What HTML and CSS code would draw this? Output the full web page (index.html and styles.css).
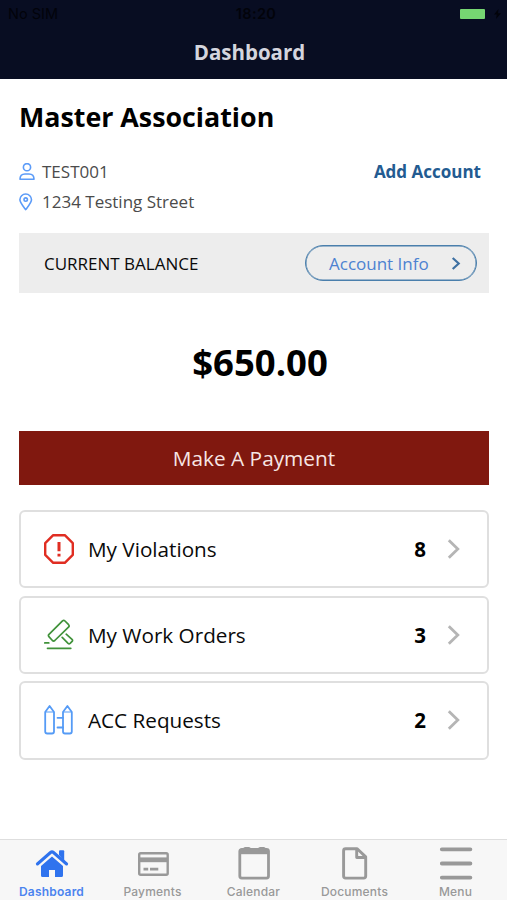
FILE: index.html
```html
<!DOCTYPE html>
<html lang="en">
<head>
<meta charset="utf-8">
<title>Dashboard</title>
<link rel="stylesheet" href="styles.css">
</head>
<body>
<div class="app">
  <header class="header">
    <div class="status">
      <span class="carrier">No SIM</span>
      <span class="clock">18:20</span>
      <span class="power"><span class="battery"></span><svg width="7" height="10" viewBox="0 0 7 10"><path d="M4.500 0 0 5.600h2.800L2 10l5-5.800H4z" fill="#02030a"/></svg></span>
    </div>
    <h1 class="title"><span>Dashboard</span></h1>
  </header>
  <main class="main">
    <h2 class="association"><span>Master Association</span></h2>
    <section class="account">
      <div class="details">
        <div class="detail"><svg width="16" height="18" viewBox="0 0 16 18" fill="none" stroke="#5b9bf8" stroke-width="1.600"><circle cx="8" cy="4.200" r="3.600"/><path d="M1 16.200c0-3.400 2.200-5.200 5-5.200h4c2.800 0 5 1.800 5 5.200z" stroke-linejoin="round"/></svg><span class="number">TEST001</span></div>
        <div class="detail"><svg width="16" height="18" viewBox="0 0 16 18" fill="none" stroke="#5b9bf8" stroke-width="1.600"><path d="M6.700 16.600C3.500 12.500.9 9.500.9 6.800a5.800 5.800 0 0 1 11.600 0c0 2.700-2.600 5.700-5.800 9.800z" stroke-linejoin="round"/><circle cx="6.700" cy="6.600" r="1.700"/></svg><span class="street">1234 Testing Street</span></div>
      </div>
      <a class="add"><span>Add Account</span></a>
    </section>
    <section class="balance">
      <span class="balance-label">CURRENT BALANCE</span>
      <a class="info"><span>Account Info</span><svg width="10" height="14" viewBox="0 0 10 14"><path d="m1.700 2 6 5.500-6 5.500" fill="none" stroke="#3e70a2" stroke-width="2.200"/></svg></a>
    </section>
    <p class="amount"><span>$650.00</span></p>
    <a class="pay"><span>Make A Payment</span></a>
    <nav class="cards">
      <a class="card">
        <svg class="icon" width="32" height="32" viewBox="0 0 32 32" fill="none" stroke="#e02d22" stroke-width="2.400"><path d="M10.200 2.200h11.600l8 8v11.600l-8 8H10.200l-8-8V10.200z" stroke-linejoin="round"/><path d="M16 9v9.300M16 20.800v2.700" stroke-width="3"/></svg>
        <span class="name violations">My Violations</span><span class="count">8</span>
        <svg class="chevron" width="14" height="20" viewBox="0 0 14 20"><path d="m1.800 1.200 9 8.800-9 8.800"/></svg>
      </a>
      <a class="card">
        <svg class="icon" width="32" height="32" viewBox="0 0 32 32" fill="none" stroke="#40923a" stroke-width="1.700" stroke-linecap="round" stroke-linejoin="round"><path d="M19.500 1.800Q20.800.8 22 2l3.600 3.700q1.100 1.300-.1 2.500L11.800 21.500q-1.200 1.100-2.400 0l-3.500-3.800q-1-1.200.1-2.300zM23.200 15.200l5.800 5.200q1 1 .1 2l-2 2q-1 .9-2 0l-5.900-6M1.800 23.900h4M4.500 29.300h23.300"/></svg>
        <span class="name orders">My Work Orders</span><span class="count">3</span>
        <svg class="chevron" width="14" height="20" viewBox="0 0 14 20"><path d="m1.800 1.200 9 8.800-9 8.800"/></svg>
      </a>
      <a class="card">
        <svg class="icon" width="32" height="32" viewBox="0 0 32 32" fill="none" stroke="#559bf6" stroke-width="1.800" stroke-linejoin="round"><path d="M2.200 8 6.600 2 11 8v19.500q0 2-2 2H4.200q-2 0-2-2zM20 8l4.400-6 4.400 6v19.500q0 2-2 2H22q-2 0-2-2z"/><path d="M2.200 8H11M20 8h8.800" stroke-width="1"/><path d="M14.500 13.800H20M14.500 23.500H20" stroke-linecap="round"/></svg>
        <span class="name requests">ACC Requests</span><span class="count">2</span>
        <svg class="chevron" width="14" height="20" viewBox="0 0 14 20"><path d="m1.800 1.200 9 8.800-9 8.800"/></svg>
      </a>
    </nav>
  </main>
  <nav class="tabs">
    <a class="tab active"><svg width="36" height="36" viewBox="0 0 36 36"><path d="M3.200 18.600 16.800 6.800q1.200-1 2.400 0l13.600 11.800" fill="none" stroke="#f7f7f7" stroke-width="5"/><path d="M25 9V5.200q0-1 1-1h3.200q1 0 1 1V15z" fill="#2f73ee"/><path d="M3.400 18 16.500 6.500q1.500-1.300 3 0L32.600 18" fill="none" stroke="#2f73ee" stroke-width="3" stroke-linecap="round"/><path d="M7 20 18 10.500 29 20v9.500q0 1.500-1.500 1.500H21v-7h-6v7H8.500Q7 31 7 29.500z" fill="#2f73ee"/></svg><span>Dashboard</span></a>
    <a class="tab"><svg width="36" height="36" viewBox="0 0 36 36" fill="none" stroke="#999" stroke-width="2.400"><rect x="4.200" y="7.200" width="28.500" height="21.500" rx="1.500"/><path d="M4 13.800h29" stroke-width="4.800"/><path d="M8.500 23.200h4.700M15 23.200h8.300" stroke-width="2.800"/></svg><span>Payments</span></a>
    <a class="tab"><svg width="36" height="36" viewBox="0 0 36 36" fill="none" stroke="#999" stroke-width="2.800"><rect x="3.800" y="3.300" width="28.700" height="28.800" rx="2"/><path d="M3.500 5.700h29" stroke-width="5"/><path d="M9.200 3h3.600M24.100 3h3.600" stroke-width="4" stroke-linecap="round"/></svg><span>Calendar</span></a>
    <a class="tab"><svg width="36" height="36" viewBox="0 0 36 36" fill="none" stroke="#999" stroke-width="2.900" stroke-linejoin="round"><path d="M8.600 2.700h11.600l8.500 8.200v19.200q0 2-2 2H8.600q-2 0-2-2V4.700q0-2 2-2zM19.700 3v8.500h9"/></svg><span>Documents</span></a>
    <a class="tab"><svg width="36" height="36" viewBox="0 0 36 36" fill="none" stroke="#999" stroke-width="3.800" stroke-linecap="round"><path d="M3.800 3.300h28.600M3.800 17.500h28.600M3.800 31.600h28.600"/></svg><span>Menu</span></a>
  </nav>
</div>
</body>
</html>
```
FILE: styles.css
```css
* { box-sizing: border-box; }
body { margin: 0; background: #fff; color: #0a0a0a; font-family: "Open Sans", sans-serif; }
svg { display: block; flex: none; }
h1, h2, p { margin: 0; }
.app { width: 507px; height: 900px; display: flex; flex-direction: column; overflow: hidden; }
.header { height: 79px; background: #080d22; }
.status { height: 28px; padding: 0 6px 0 8px; display: grid; grid-template-columns: 1fr auto 1fr; align-items: center; font: 14.5px/28px Inter, sans-serif; color: #02030a; }
.clock { font-weight: 600; letter-spacing: .4px; padding-left: 3px; }
.power { display: flex; justify-content: flex-end; align-items: center; gap: 9px; }
.battery { width: 25px; height: 10px; border-radius: 1px; background: #76d672; }
.title { height: 48px; padding-right: 8px; text-align: center; font-size: 20.5px; font-weight: 700; line-height: 49px; color: #d4d5de; }
.main { flex: 1; padding: 18px 18px 0 19px; }
.association { font-size: 26.8px; font-weight: 700; line-height: 39px; height: 40px; color: #000; }
.account { margin-top: 20px; display: flex; justify-content: space-between; padding-right: 8px; font-size: 17px; line-height: 30px; }
.detail { display: flex; align-items: center; gap: 7px; height: 30px; color: #4b4b4b; }
.add { font-weight: 700; color: #235b91; }
.balance { margin-top: 16px; height: 60px; padding: 0 12px 0 25px; display: flex; align-items: center; justify-content: space-between; background: #ededed; font-size: 17px; }
.info { width: 172px; height: 36px; padding: 0 15px 0 23px; border: 1px solid #4a7fac; box-shadow: inset 0 0 0 .5px #4a7fac; border-radius: 19px; display: flex; align-items: center; justify-content: space-between; color: #4c82d1; }
.amount { margin-top: 40px; padding-left: 12px; height: 60px; text-align: center; font-size: 36.5px; font-weight: 700; line-height: 58px; color: #000; }
.amount + .pay { margin-top: 38px; }
.pay { display: flex; align-items: center; justify-content: center; height: 54px; background: #80180f; color: #f7e6e4; font-size: 20.8px; }
.cards { margin-top: 25px; display: grid; gap: 7.5px; }
.card { height: 78.2px; padding: 0 26px 0 22px; border: 2px solid #dfdfdf; border-radius: 6px; display: flex; align-items: center; font-size: 20.7px; }
.name { margin-left: 13px; }
.count { margin-left: auto; margin-right: 21px; font-size: 20.5px; font-weight: 700; color: #000; }
.chevron path { fill: none; stroke: #b5b5b5; stroke-width: 2.8; }
.tabs { height: 61px; border-top: 1px solid #dedede; background: #f7f7f7; display: grid; grid-template-columns: repeat(5, 101px); padding-left: 1px; }
.tab { display: flex; flex-direction: column; align-items: center; padding-top: 6px; color: #999; font: 500 12px/16px Inter, sans-serif; letter-spacing: .2px; }
.tab span { margin-top: 2px; }
.active { color: #4b84ef; font-weight: 600; }
```
